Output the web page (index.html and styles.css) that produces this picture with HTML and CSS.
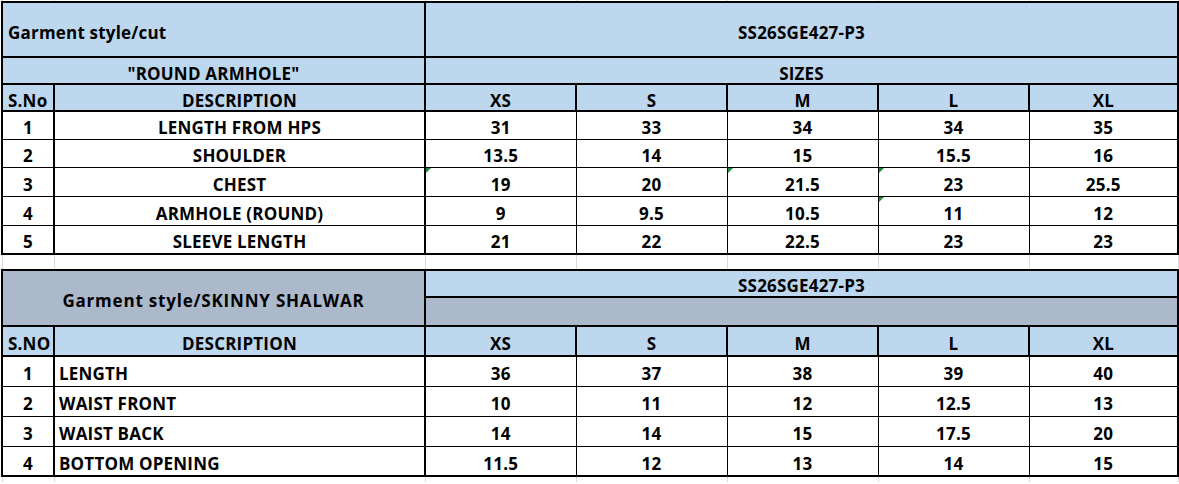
FILE: index.html
```html
<!DOCTYPE html>
<html>
<head>
<meta charset="utf-8">
<link rel="stylesheet" href="styles.css">
</head>
<body>
<table class="sheet">
  <colgroup>
    <col class="col-a"><col class="col-b"><col class="col-s"><col class="col-s"><col class="col-s"><col class="col-s"><col class="col-g">
  </colgroup>
  <tr class="stub">
    <td class="grid"></td><td class="grid"></td><td class="grid"></td><td class="grid"></td><td class="grid"></td><td class="grid"></td><td class="grid"></td>
  </tr>
  <tr class="r-title">
    <td class="hd blue left" colspan="2">Garment style/cut</td>
    <td class="hd blue" colspan="5">SS26SGE427-P3</td>
  </tr>
  <tr class="r-sub">
    <td class="hd blue" colspan="2">"ROUND ARMHOLE"</td>
    <td class="hd blue" colspan="5">SIZES</td>
  </tr>
  <tr class="r-head">
    <td class="hd blue left">S.No</td>
    <td class="hd blue">DESCRIPTION</td>
    <td class="hd blue">XS</td><td class="hd blue">S</td><td class="hd blue">M</td><td class="hd blue">L</td><td class="hd blue">XL</td>
  </tr>
  <tr class="r-d1">
    <td class="ca">1</td><td class="cb">LENGTH FROM HPS</td>
    <td class="cc">31</td><td class="cn">33</td><td class="cn">34</td><td class="cn">34</td><td class="cg">35</td>
  </tr>
  <tr class="r-d1">
    <td class="ca">2</td><td class="cb">SHOULDER</td>
    <td class="cc">13.5</td><td class="cn">14</td><td class="cn">15</td><td class="cn">15.5</td><td class="cg">16</td>
  </tr>
  <tr class="r-d2">
    <td class="ca">3</td><td class="cb">CHEST</td>
    <td class="cc flag">19</td><td class="cn">20</td><td class="cn flag">21.5</td><td class="cn flag">23</td><td class="cg">25.5</td>
  </tr>
  <tr class="r-d2">
    <td class="ca">4</td><td class="cb">ARMHOLE (ROUND)</td>
    <td class="cc">9</td><td class="cn">9.5</td><td class="cn">10.5</td><td class="cn flag">11</td><td class="cg">12</td>
  </tr>
  <tr class="r-d2 endrow">
    <td class="ca">5</td><td class="cb">SLEEVE LENGTH</td>
    <td class="cc">21</td><td class="cn">22</td><td class="cn">22.5</td><td class="cn">23</td><td class="cg">23</td>
  </tr>
  <tr class="gap">
    <td class="grid"></td><td class="grid"></td><td class="grid"></td><td class="grid"></td><td class="grid"></td><td class="grid"></td><td class="grid"></td>
  </tr>
  <tr class="r-code">
    <td class="hd grey wide" colspan="2" rowspan="2">Garment style/SKINNY SHALWAR</td>
    <td class="hd blue low" colspan="5">SS26SGE427-P3</td>
  </tr>
  <tr class="r-grey">
    <td class="hd grey" colspan="5"></td>
  </tr>
  <tr class="r-head2">
    <td class="hd blue left">S.NO</td>
    <td class="hd blue">DESCRIPTION</td>
    <td class="hd blue">XS</td><td class="hd blue">S</td><td class="hd blue">M</td><td class="hd blue">L</td><td class="hd blue">XL</td>
  </tr>
  <tr class="r-d3">
    <td class="ca">1</td><td class="cb left2">LENGTH</td>
    <td class="cc">36</td><td class="cn">37</td><td class="cn">38</td><td class="cn">39</td><td class="cg">40</td>
  </tr>
  <tr class="r-d3">
    <td class="ca">2</td><td class="cb left2">WAIST FRONT</td>
    <td class="cc">10</td><td class="cn">11</td><td class="cn">12</td><td class="cn">12.5</td><td class="cg">13</td>
  </tr>
  <tr class="r-d3">
    <td class="ca">3</td><td class="cb left2">WAIST BACK</td>
    <td class="cc">14</td><td class="cn">14</td><td class="cn">15</td><td class="cn">17.5</td><td class="cg">20</td>
  </tr>
  <tr class="r-d3 endrow">
    <td class="ca">4</td><td class="cb left2">BOTTOM OPENING</td>
    <td class="cc">11.5</td><td class="cn">12</td><td class="cn">13</td><td class="cn">14</td><td class="cg">15</td>
  </tr>
  <tr class="stub-b">
    <td class="grid"></td><td class="grid"></td><td class="grid"></td><td class="grid"></td><td class="grid"></td><td class="grid"></td><td class="grid"></td>
  </tr>
</table>
</body>
</html>
```
FILE: styles.css
```css
html, body {
  margin: 0;
  padding: 0;
  background: #ffffff;
}

body {
  font-family: "Open Sans", Lato, "DejaVu Sans", sans-serif;
  font-weight: 700;
  font-size: 17px;
  letter-spacing: 0.2px;
  color: #000;
}

.sheet {
  border-collapse: collapse;
  table-layout: fixed;
  margin-left: 1px;
  width: 1176px;
}

.col-a { width: 52px; }
.col-b { width: 371px; }
.col-s { width: 151px; }
.col-g { width: 149px; }

td {
  padding: 0;
  text-align: center;
  vertical-align: middle;
  white-space: nowrap;
  line-height: 1;
  padding-top: 5px;
  border: 1px solid #000;
}

td.grid {
  border: none;
  border-left: 1px solid #dadada;
  border-right: 1px solid #dadada;
  padding: 0;
}

.stub { height: 2px; }
.gap { height: 16px; }
.stub-b { height: 6px; }

.r-title { height: 55px; }
.r-sub { height: 27px; }
.r-head { height: 27px; }
.r-d1 { height: 28px; }
.r-d2 { height: 29px; }
.r-code { height: 27px; }
.r-grey { height: 29px; }
.r-head2 { height: 30px; }
.r-d3 { height: 30px; }

.hd { border: 2px solid #000; }
.blue { background: #bdd7ee; }
.grey { background: #acb9ca; }

.wide { letter-spacing: 0.8px; }

.left {
  text-align: left;
  padding-left: 5px;
}

.left2 {
  text-align: left;
  padding-left: 4px;
}

.low {
  vertical-align: bottom;
  padding-top: 0;
  padding-bottom: 2px;
}

.ca { border-left: 2px solid #000; border-right: 2px solid #000; }
.cb { border-right: 2px solid #000; }
.cc { border-left: 2px solid #000; }
.cg { border-right: 2px solid #000; }

.endrow td { border-bottom: 2px solid #000; }

.flag { position: relative; }
.flag::before {
  content: "";
  position: absolute;
  left: 0;
  top: 0;
  border-top: 5px solid #1e8c3c;
  border-right: 5px solid transparent;
}
```
